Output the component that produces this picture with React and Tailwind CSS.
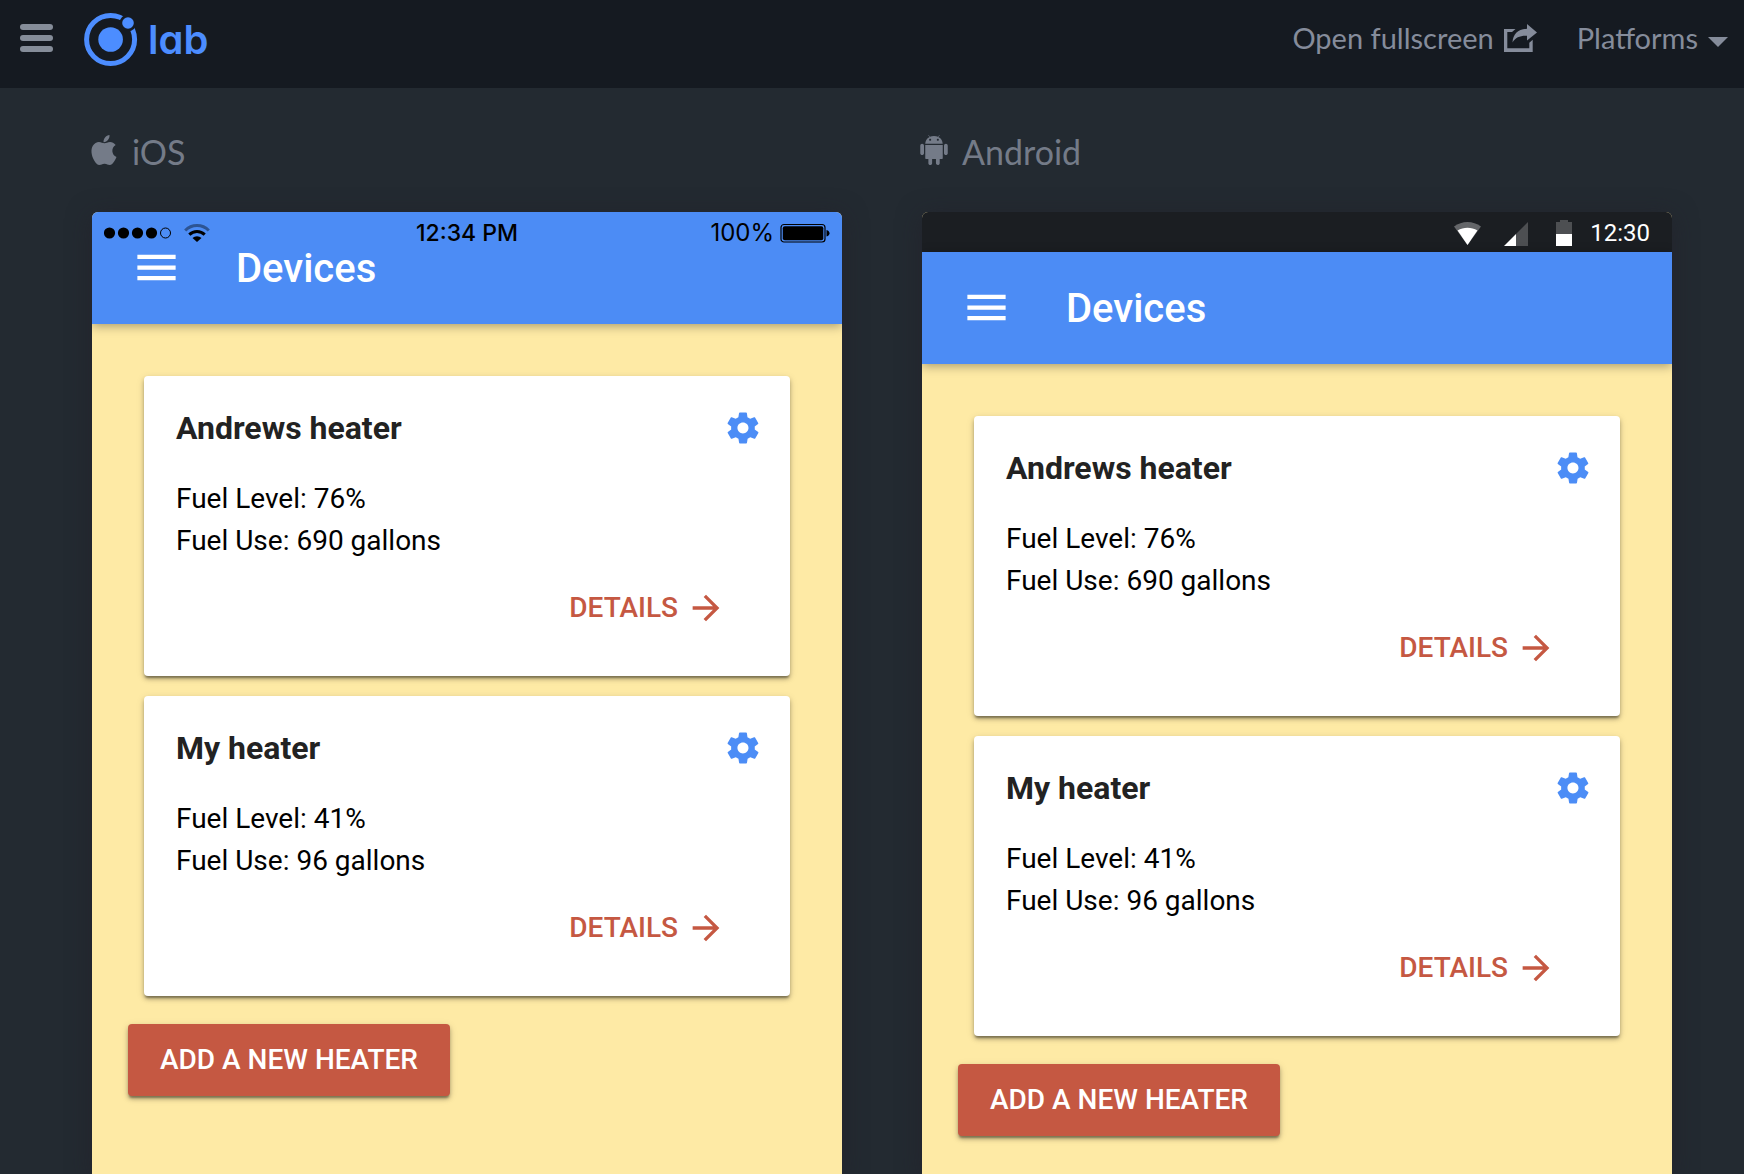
import { IoMdArrowForward, IoMdSettings, IoMdMenu, IoLogoApple, IoLogoAndroid } from "react-icons/io";

const heaters = [
  { name: "Andrews heater", level: "76%", use: "690 gallons" },
  { name: "My heater", level: "41%", use: "96 gallons" },
];

function IonicLogo() {
  return (
    <svg className="size-[54px]" viewBox="0 0 54 54" aria-hidden="true">
      <mask id="ring-gap">
        <rect width="54" height="54" fill="white" />
        <circle cx="44" cy="10" r="8.4" fill="black" />
      </mask>
      <circle cx="26.6" cy="26.5" r="24" fill="none" stroke="#4c8dff" strokeWidth="5" mask="url(#ring-gap)" />
      <circle cx="26.6" cy="26.5" r="12.3" fill="#4c8dff" />
      <circle cx="44" cy="10" r="5.8" fill="#4c8dff" />
    </svg>
  );
}

function ShareIcon() {
  return (
    <svg className="h-7 w-[33px]" viewBox="0 0 33 28" fill="#858c9b" aria-hidden="true">
      <path d="M0 5h11.500L8 8H3.300V24.300h22v-5.500l3.400-3V28H0z" />
      <path d="M23 0l10 8.400-10 8v-4.600C16 11.500 11.500 13.500 8.500 18.500 9 10 14 5.200 23 4.700z" />
    </svg>
  );
}

function TopBar() {
  return (
    <header className="flex h-22 items-start justify-between bg-[#151a21] pr-4 pl-5 text-[#858c9b]">
      <div className="flex h-19 items-center">
        <button type="button" aria-label="Toggle sidebar" className="flex flex-col gap-[5px]">
          <span className="h-1.5 w-[33px] rounded-full bg-[#858d99]" />
          <span className="h-1.5 w-[33px] rounded-full bg-[#858d99]" />
          <span className="h-1.5 w-[33px] rounded-full bg-[#858d99]" />
        </button>
        <a href="#" className="mt-[3px] ml-[31px] flex items-center gap-2.5">
          <IonicLogo />
          <span className="font-['Inter',sans-serif] text-[40px] leading-[54px] font-semibold text-[#4c8dff] [font-feature-settings:'cv11']">
            lab
          </span>
        </a>
      </div>
      <nav className="flex h-19 items-center gap-10 text-[29px] leading-10">
        <a href="#" className="flex items-center gap-2.5">
          Open fullscreen
          <ShareIcon />
        </a>
        <button type="button" className="flex items-center gap-2.5">
          Platforms
          <svg className="mt-2 h-2.5 w-5" viewBox="0 0 20 10" fill="#858c9b" aria-hidden="true">
            <path d="M0 0h20L10 10z" />
          </svg>
        </button>
      </nav>
    </header>
  );
}

function IosStatus() {
  return (
    <div className="absolute inset-x-0 top-0 grid h-10 grid-cols-3 items-center pt-px pr-3 pl-3 font-['Inter',sans-serif] text-[24px] leading-10 text-black">
      <div className="flex items-center gap-3">
        <svg className="h-3 w-[68px]" viewBox="0 0 68 12" aria-hidden="true">
          <circle cx="5.500" cy="6" r="5.600" />
          <circle cx="19.500" cy="6" r="5.600" />
          <circle cx="33.500" cy="6" r="5.600" />
          <circle cx="47.500" cy="6" r="5.600" />
          <circle cx="61.500" cy="6" r="5" fill="none" stroke="black" />
        </svg>
        <svg className="h-[18px] w-[26px]" viewBox="0 0 26 18" fill="none" stroke="black" aria-hidden="true">
          <path d="M1.200 6.500a16.500 16.500 0 0 1 23.600 0" strokeWidth="3" opacity=".4" />
          <path d="M5.300 10.600a11 11 0 0 1 15.400 0" strokeWidth="3" />
          <path d="M8.500 14a6.400 6.400 0 0 1 9 0L13 18z" fill="black" stroke="none" />
        </svg>
      </div>
      <span className="text-center text-[23px] font-medium">12:34 PM</span>
      <div className="flex items-center justify-end gap-1.5">
        100%
        <svg className="h-5 w-[50px]" viewBox="0 0 50 20" aria-hidden="true">
          <rect x="1" y="1.500" width="44" height="17.500" rx="3" fill="none" stroke="black" strokeWidth="1.200" />
          <rect x="2.800" y="3.200" width="40.500" height="14" rx="2" />
          <path d="M46.500 7c4 .6 4 6 0 6.600z" />
        </svg>
      </div>
    </div>
  );
}

function AndroidStatus() {
  return (
    <div className="flex h-10 items-center justify-end bg-[#1b1e22] pt-px pr-[22px] text-[24px] leading-10 text-white">
      <svg className="h-[26px] w-[118px]" viewBox="0 0 118 26" fill="white" aria-hidden="true">
        <path d="M0 6.500C8 .5 19 .5 27 6.500L13.500 25z" opacity=".32" />
        <path d="M3.600 10.500C9.500 6.800 17.500 6.800 23.400 10.500L13.500 25z" />
        <path d="M74 2v24H62V14z" opacity=".22" />
        <path d="M62 14v12H50z" />
        <path d="M102 14V2h4V0h8v2h4v12z" opacity=".22" />
        <path d="M102 14h16v12h-16z" />
      </svg>
      <span className="ml-[18px]">12:30</span>
    </div>
  );
}

function HeaterCard({ heater }) {
  return (
    <article className="h-75 rounded-[4px] bg-white px-8 pt-8 shadow-[0_3px_2px_-1px_rgba(0,0,0,0.3),0_3px_4px_0_rgba(0,0,0,0.25),0_2px_9px_0_rgba(0,0,0,0.12)]">
      <div className="flex h-10 items-center justify-between">
        <h2 className="text-[32px] leading-10 font-bold text-[#222]">{heater.name}</h2>
        <button type="button" aria-label={`Settings for ${heater.name}`} className="-mr-1">
          <IoMdSettings className="size-[38px] text-[#4c8df6]" />
        </button>
      </div>
      <div className="mt-[30px] text-[28px] leading-[42px] text-black">
        <p>Fuel Level: {heater.level}</p>
        <p>Fuel Use: {heater.use}</p>
      </div>
      <div className="mt-[10px] flex justify-end pr-8">
        <button type="button" className="flex h-18 items-center gap-2 text-[28px] font-medium text-[#c55842]">
          DETAILS
          <IoMdArrowForward className="size-10" />
        </button>
      </div>
    </article>
  );
}

function Device({ icon, label, ios }) {
  return (
    <section className="flex min-w-0 flex-col">
      <h1 className="mb-10 flex h-10 items-center gap-2 text-[34px] leading-10 text-[#747b88]">
        {icon}
        {label}
      </h1>
      <div className="relative flex-1 overflow-hidden rounded-t-[6px] bg-[#feeaa5] font-['Roboto',sans-serif] shadow-[0_4px_24px_rgba(36,30,40,0.5)]">
        {!ios && <AndroidStatus />}
        <div className="flex h-28 items-center bg-[#4c8cf5] pl-[39px] text-white shadow-[0_2px_10px_rgba(0,0,0,0.35)]">
          <button type="button" aria-label="Menu" className="-mt-0.5">
            <IoMdMenu className="size-[51px]" />
          </button>
          <span className="ml-[54px] pt-0.5 text-[40px] leading-[48px] font-medium">Devices</span>
        </div>
        {ios && <IosStatus />}
        <div className="px-9 pt-13 pb-10">
          <div className="flex flex-col gap-5 px-4">
            {heaters.map((heater) => (
              <HeaterCard key={heater.name} heater={heater} />
            ))}
          </div>
          <button
            type="button"
            className="mt-7 h-18 rounded-[4px] bg-[#c55842] px-8 text-[28px] font-medium text-white shadow-[0_3px_2px_-1px_rgba(0,0,0,0.3),0_3px_4px_0_rgba(0,0,0,0.25),0_2px_9px_0_rgba(0,0,0,0.12)]"
          >
            ADD A NEW HEATER
          </button>
        </div>
      </div>
    </section>
  );
}

export default function App() {
  return (
    <div className="flex min-h-screen flex-col bg-[#232a31] font-['Lato',sans-serif]">
      <TopBar />
      <main className="grid flex-1 grid-cols-2 gap-20 pt-11 pr-18 pl-[92px]">
        <Device ios label="iOS" icon={<IoLogoApple className="-mt-1 -ml-2 size-10" />} />
        <Device label="Android" icon={<IoLogoAndroid className="-mt-1 -ml-2 size-10" />} />
      </main>
    </div>
  );
}
